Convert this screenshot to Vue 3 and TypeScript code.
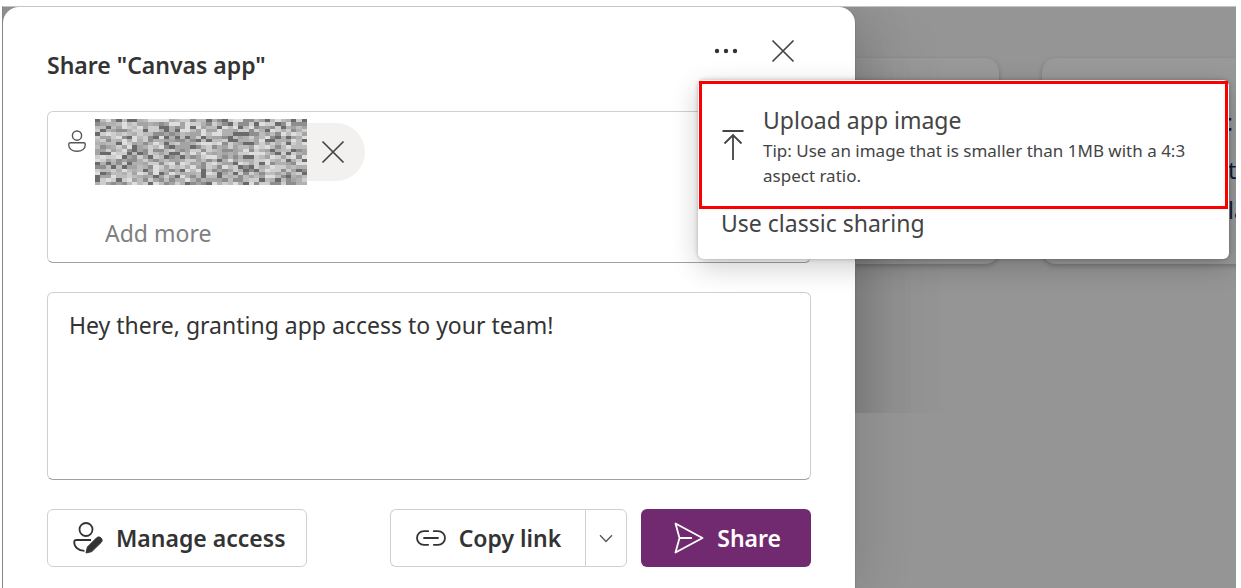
<script setup lang="ts">
import { ref } from 'vue'

interface Cell {
  x: number
  y: number
  fill: string
}

const columns = 40
const rows = 20
const shades = ['#6a6a6a', '#8e8e8e', '#a4a4a4', '#b0b0b0', '#bcbcbc', '#cdcdcd', '#dedede']

function buildMosaic(): Cell[] {
  const cells: Cell[] = []
  let seed = 4711
  for (let y = 0; y < rows; y++) {
    for (let x = 0; x < columns; x++) {
      seed = (seed * 48271) % 2147483647
      cells.push({ x, y, fill: shades[Math.floor((seed / 2147483647) * shades.length)] })
    }
  }
  return cells
}

const mosaic = buildMosaic()
const message = ref('Hey there, granting app access to your team!')
const person = ref('')
</script>

<template>
  <div class="page">
    <div class="cards" aria-hidden="true">
      <div class="card"></div>
      <div class="card">
        <strong>t</strong>
        <span>t</span>
        <span>la</span>
      </div>
    </div>

    <section class="dialog" role="dialog" aria-labelledby="dialog-title">
      <header class="header">
        <h1 id="dialog-title">Share "Canvas app"</h1>
        <div class="tools">
          <div class="more">
            <button type="button" class="icon-button" aria-label="More options">
              <svg width="24" height="24" viewBox="0 0 24 24" fill="#333">
                <circle cx="3" cy="12" r="2.2" />
                <circle cx="12" cy="12" r="2.2" />
                <circle cx="21" cy="12" r="2.2" />
              </svg>
            </button>
            <div class="menu" role="menu">
              <button type="button" class="menu-item highlighted" role="menuitem">
                <svg class="upload" width="22" height="32" viewBox="0 0 22 32" fill="none" stroke="#444" stroke-width="1.8">
                  <path d="M0.5 2H21.5M11 31V6M2.5 14.5L11 6L19.5 14.5" />
                </svg>
                <span class="item-text">
                  <span class="item-title">Upload app image</span>
                  <span class="item-tip">Tip: Use an image that is smaller than 1MB with a 4:3 aspect ratio.</span>
                </span>
              </button>
              <button type="button" class="menu-item classic" role="menuitem">Use classic sharing</button>
            </div>
          </div>
          <button type="button" class="icon-button" aria-label="Close">
            <svg width="24" height="24" viewBox="0 0 24 24" fill="none" stroke="#444" stroke-width="1.7">
              <path d="M1.5 1.5L22.5 22.5M22.5 1.5L1.5 22.5" />
            </svg>
          </button>
        </div>
      </header>

      <div class="people">
        <div class="person-row">
          <svg class="person-icon" width="18" height="22" viewBox="0 0 18 22" fill="none" stroke="#555" stroke-width="1.4">
            <circle cx="9" cy="5.6" r="4.6" />
            <path d="M2.4 12.8H15.6C16.6 12.8 17.3 13.5 17.3 14.5C17.3 18.6 13.8 21.2 9 21.2C4.2 21.2 0.7 18.6 0.7 14.5C0.7 13.5 1.4 12.8 2.4 12.8Z" />
          </svg>
          <div class="pill">
            <svg class="mosaic" width="212" height="66" viewBox="0 0 40 20" preserveAspectRatio="none" shape-rendering="crispEdges">
              <rect v-for="cell in mosaic" :key="cell.y * columns + cell.x" :x="cell.x" :y="cell.y" width="1" height="1" :fill="cell.fill" />
            </svg>
            <button type="button" class="icon-button" aria-label="Remove person">
              <svg width="24" height="24" viewBox="0 0 24 24" fill="none" stroke="#444" stroke-width="1.7">
                <path d="M1.5 1.5L22.5 22.5M22.5 1.5L1.5 22.5" />
              </svg>
            </button>
          </div>
        </div>
        <input v-model="person" type="text" class="add" placeholder="Add more" aria-label="Add more" />
      </div>

      <textarea v-model="message" class="message" aria-label="Message"></textarea>

      <footer class="footer">
        <button type="button" class="button manage">
          <svg width="30" height="32" viewBox="0 0 30 32" fill="none" stroke="#333" stroke-width="1.8">
            <circle cx="13" cy="7.5" r="6.5" />
            <path d="M18 18H3.5C2 18 1.2 18.8 1.2 20C1.2 25 5.2 28.6 11.5 28.9" />
            <path d="M13 31L14.4 25L23.6 15.8C26.4 13.2 31 17.2 28.3 20.3L18.8 29.6Z" fill="#333" stroke="#333" stroke-width="1" stroke-linejoin="round" />
          </svg>
          <span>Manage access</span>
        </button>
        <div class="split">
          <button type="button" class="button copy">
            <svg width="30" height="16" viewBox="0 0 30 16" fill="none" stroke="#333" stroke-width="1.8" stroke-linecap="round">
              <path d="M12.2 1.2H8C4 1.2 1 4.2 1 8C1 11.8 4 14.8 8 14.8H12.2M17.8 1.2H22C26 1.2 29 4.2 29 8C29 11.8 26 14.8 22 14.8H17.8M8 8H22" />
            </svg>
            <span>Copy link</span>
          </button>
          <button type="button" class="button caret" aria-label="Copy link options">
            <svg width="14" height="9" viewBox="0 0 14 9" fill="none" stroke="#555" stroke-width="1.3">
              <path d="M1 1.2L7 7.5L13 1.2" />
            </svg>
          </button>
        </div>
        <button type="button" class="button share">
          <svg width="30" height="32" viewBox="0 0 30 32" fill="none" stroke="#fff" stroke-width="1.8" stroke-linejoin="round">
            <path d="M1.5 1.5L28.5 16L1.5 30.5L5.5 16ZM5.5 16H18" />
          </svg>
          <span>Share</span>
        </button>
      </footer>
    </section>
    <span class="edge-mark" aria-hidden="true"></span>
  </div>
</template>

<style>
body {
  margin: 0;
  background: #fff;
}
</style>

<style scoped>
.page {
  position: relative;
  box-sizing: border-box;
  height: calc(100vh - 6px);
  margin: 6px 5px 0 2px;
  border-top: 1px solid #c4c4c4;
  border-left: 1px solid #858585;
  overflow: hidden;
  background: #959595;
  color: #333;
  font-family: "Noto Sans", "Open Sans", sans-serif;
  font-size: 23px;
  line-height: 36px;
}

button,
input,
textarea {
  margin: 0;
  padding: 0;
  border: 0;
  background: none;
  color: inherit;
  font: inherit;
}

.cards {
  position: absolute;
  top: 51px;
  left: 540px;
  right: -40px;
  display: grid;
  grid-template-columns: 456px 1fr;
  gap: 43px;
}

.card {
  display: flex;
  flex-direction: column;
  box-sizing: border-box;
  height: 206px;
  padding: 36px 0 0 186px;
  border-radius: 14px;
  background: #999;
  box-shadow: 0 2px 5px rgba(0, 0, 0, 0.22);
  color: #10193a;
  line-height: 40px;
}

.card strong {
  line-height: 56px;
  text-indent: -6px;
}

.dialog {
  position: relative;
  box-sizing: border-box;
  width: 69.1%;
  min-height: 100%;
  padding: 28px 44px;
  border-radius: 16px 16px 0 0;
  background: #fff;
  box-shadow: 1px 0 1px #7f8282, 0 0 60px rgba(0, 0, 0, 0.16);
}

.dialog::after {
  content: "";
  position: absolute;
  top: 0;
  left: 100%;
  width: 90px;
  height: 406px;
  background: linear-gradient(to right, rgba(0, 0, 0, 0.1), rgba(0, 0, 0, 0.03) 45%, transparent);
  mask-image: linear-gradient(to bottom, transparent, #000 100px);
}

.header {
  display: flex;
  justify-content: space-between;
  align-items: flex-start;
  margin-bottom: 28px;
}

h1 {
  margin: 0;
  padding-top: 12px;
  font-size: 23px;
  font-weight: 600;
  line-height: 36px;
}

.tools {
  display: flex;
  gap: 25px;
  padding-right: 12px;
}

.more {
  position: relative;
}

.icon-button {
  display: flex;
  align-items: center;
  justify-content: center;
  width: 32px;
  height: 32px;
}

.menu {
  position: absolute;
  z-index: 2;
  top: 45px;
  left: -12px;
  box-sizing: border-box;
  width: 531px;
  padding: 1px;
  border-radius: 6px;
  background: #fff;
  box-shadow: 0 8px 28px rgba(0, 0, 0, 0.2), 0 0 4px rgba(0, 0, 0, 0.25);
  color: #444;
}

.menu-item {
  display: flex;
  box-sizing: border-box;
  width: 100%;
  text-align: left;
}

.highlighted {
  align-items: center;
  gap: 19px;
  padding: 18px 20px;
  border: 3px solid #fc0000;
}

.upload,
.person-icon,
.button svg {
  flex: none;
}

.item-text {
  display: flex;
  flex-direction: column;
}

.item-title {
  line-height: 36px;
}

.item-tip {
  font-size: 17px;
  line-height: 25px;
}

.classic {
  padding: 0 22px 20px;
  line-height: 29px;
}

.people,
.message {
  box-sizing: border-box;
  width: 100%;
  border: 1px solid #cfcfcf;
  border-bottom-color: #a0a0a0;
  border-radius: 6px;
}

.people {
  padding: 11px 20px;
}

.person-row {
  display: flex;
  align-items: flex-start;
  gap: 9px;
}

.person-icon {
  margin-top: 7px;
}

.pill {
  display: flex;
  align-items: center;
  gap: 10px;
  height: 58px;
  padding-right: 16px;
  border-radius: 0 29px 29px 0;
  background: #f2f1f0;
}

.add {
  display: block;
  box-sizing: border-box;
  width: 100%;
  height: 36px;
  margin-top: 34px;
  padding-left: 37px;
}

.add::placeholder {
  color: #808080;
  opacity: 1;
}

.message {
  display: block;
  height: 188px;
  margin-top: 29px;
  padding: 14px 21px;
  resize: none;
}

.footer {
  display: flex;
  gap: 14px;
  margin-top: 29px;
}

.button {
  display: flex;
  align-items: center;
  justify-content: center;
  gap: 13px;
  box-sizing: border-box;
  height: 58px;
  padding: 0 21px 0 25px;
  border: 1px solid #d0d0d0;
  border-radius: 6px;
  font-weight: 600;
  white-space: nowrap;
}

.manage {
  margin-right: auto;
}

.split {
  display: flex;
}

.copy {
  padding-right: 24px;
  border-radius: 6px 0 0 6px;
  border-right: 0;
}

.caret {
  width: 42px;
  padding: 0;
  border-radius: 0 6px 6px 0;
}

.share {
  padding: 0 30px 0 33px;
  border: 0;
  background: #712a70;
  color: #fff;
}

.edge-mark {
  position: absolute;
  top: 162px;
  left: -1px;
  width: 1px;
  height: 9px;
  background: #5a2410;
}
</style>
